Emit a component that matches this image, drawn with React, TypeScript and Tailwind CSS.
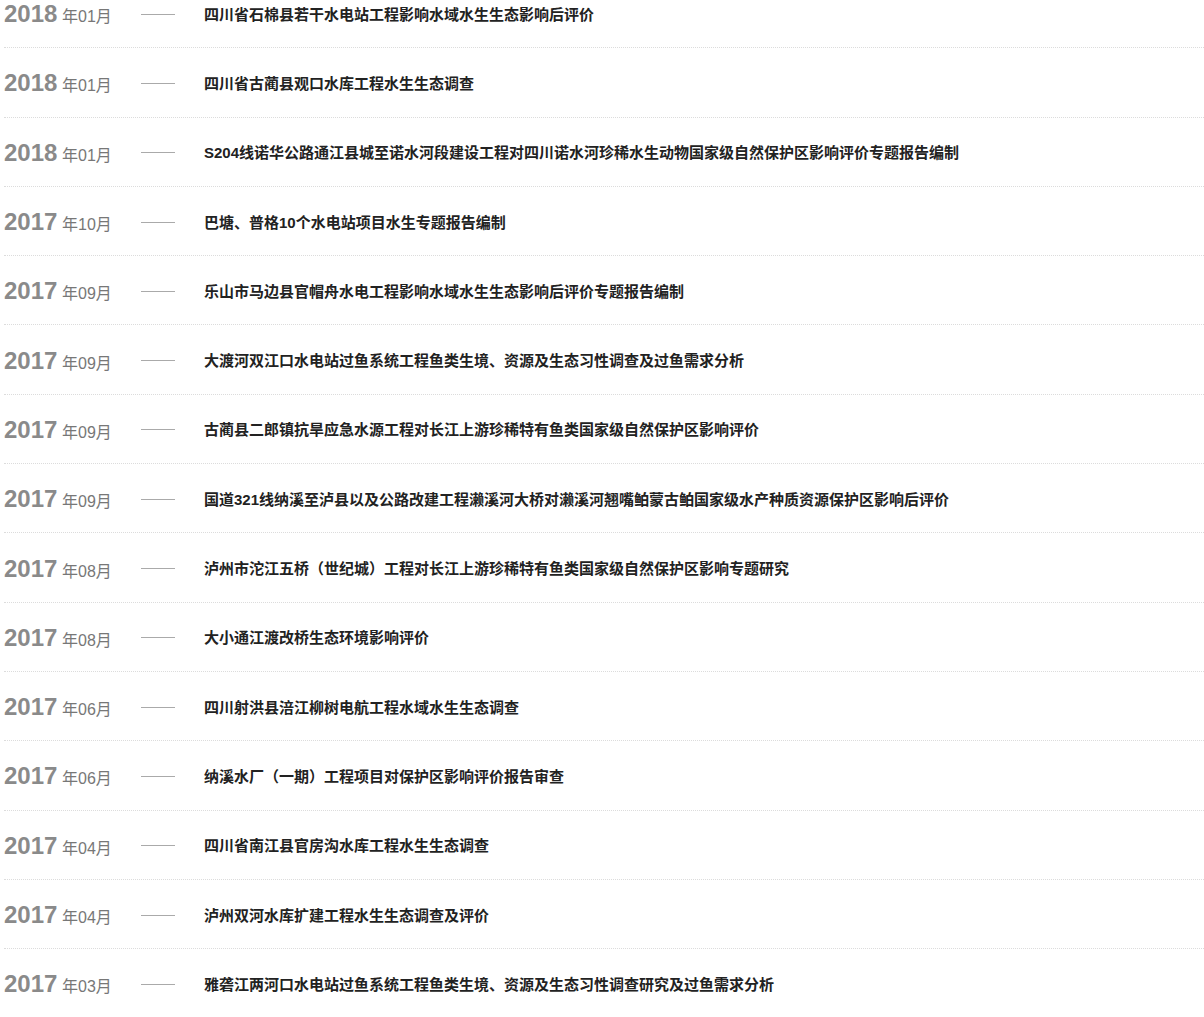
import React from 'react';

const items = [
  { year: '2018', month: '年01月', title: '四川省石棉县若干水电站工程影响水域水生生态影响后评价' },
  { year: '2018', month: '年01月', title: '四川省古蔺县观口水库工程水生生态调查' },
  { year: '2018', month: '年01月', title: 'S204线诺华公路通江县城至诺水河段建设工程对四川诺水河珍稀水生动物国家级自然保护区影响评价专题报告编制' },
  { year: '2017', month: '年10月', title: '巴塘、普格10个水电站项目水生专题报告编制' },
  { year: '2017', month: '年09月', title: '乐山市马边县官帽舟水电工程影响水域水生生态影响后评价专题报告编制' },
  { year: '2017', month: '年09月', title: '大渡河双江口水电站过鱼系统工程鱼类生境、资源及生态习性调查及过鱼需求分析' },
  { year: '2017', month: '年09月', title: '古蔺县二郎镇抗旱应急水源工程对长江上游珍稀特有鱼类国家级自然保护区影响评价' },
  { year: '2017', month: '年09月', title: '国道321线纳溪至泸县以及公路改建工程濑溪河大桥对濑溪河翘嘴鲌蒙古鲌国家级水产种质资源保护区影响后评价' },
  { year: '2017', month: '年08月', title: '泸州市沱江五桥（世纪城）工程对长江上游珍稀特有鱼类国家级自然保护区影响专题研究' },
  { year: '2017', month: '年08月', title: '大小通江渡改桥生态环境影响评价' },
  { year: '2017', month: '年06月', title: '四川射洪县涪江柳树电航工程水域水生生态调查' },
  { year: '2017', month: '年06月', title: '纳溪水厂（一期）工程项目对保护区影响评价报告审查' },
  { year: '2017', month: '年04月', title: '四川省南江县官房沟水库工程水生生态调查' },
  { year: '2017', month: '年04月', title: '泸州双河水库扩建工程水生生态调查及评价' },
  { year: '2017', month: '年03月', title: '雅砻江两河口水电站过鱼系统工程鱼类生境、资源及生态习性调查研究及过鱼需求分析' },
];

export default function App() {
  return (
    <div className="h-[1017px] overflow-hidden bg-white font-['Liberation_Sans','Noto_Sans_CJK_SC',sans-serif]">
      <ul className="-mt-[21px] pl-[4px]">
        {items.map((item, i) => (
          <li
            key={i}
            className="flex h-[69.3px] items-center border-b border-dotted border-[#dcdcdc] pt-[2px]"
          >
            <div className="flex w-[137px] shrink-0 items-baseline">
              <span className="w-[58px] text-[24px] font-bold leading-none text-[#8a8a8a]">{item.year}</span>
              <span className="text-[16px] leading-none text-[#777777]">{item.month}</span>
            </div>
            <span className="h-px w-[34px] shrink-0 bg-[#aaaaaa]" />
            <span className="ml-[29px] whitespace-nowrap text-[15px] font-bold leading-none text-[#222222]">
              {item.title}
            </span>
          </li>
        ))}
      </ul>
    </div>
  );
}
